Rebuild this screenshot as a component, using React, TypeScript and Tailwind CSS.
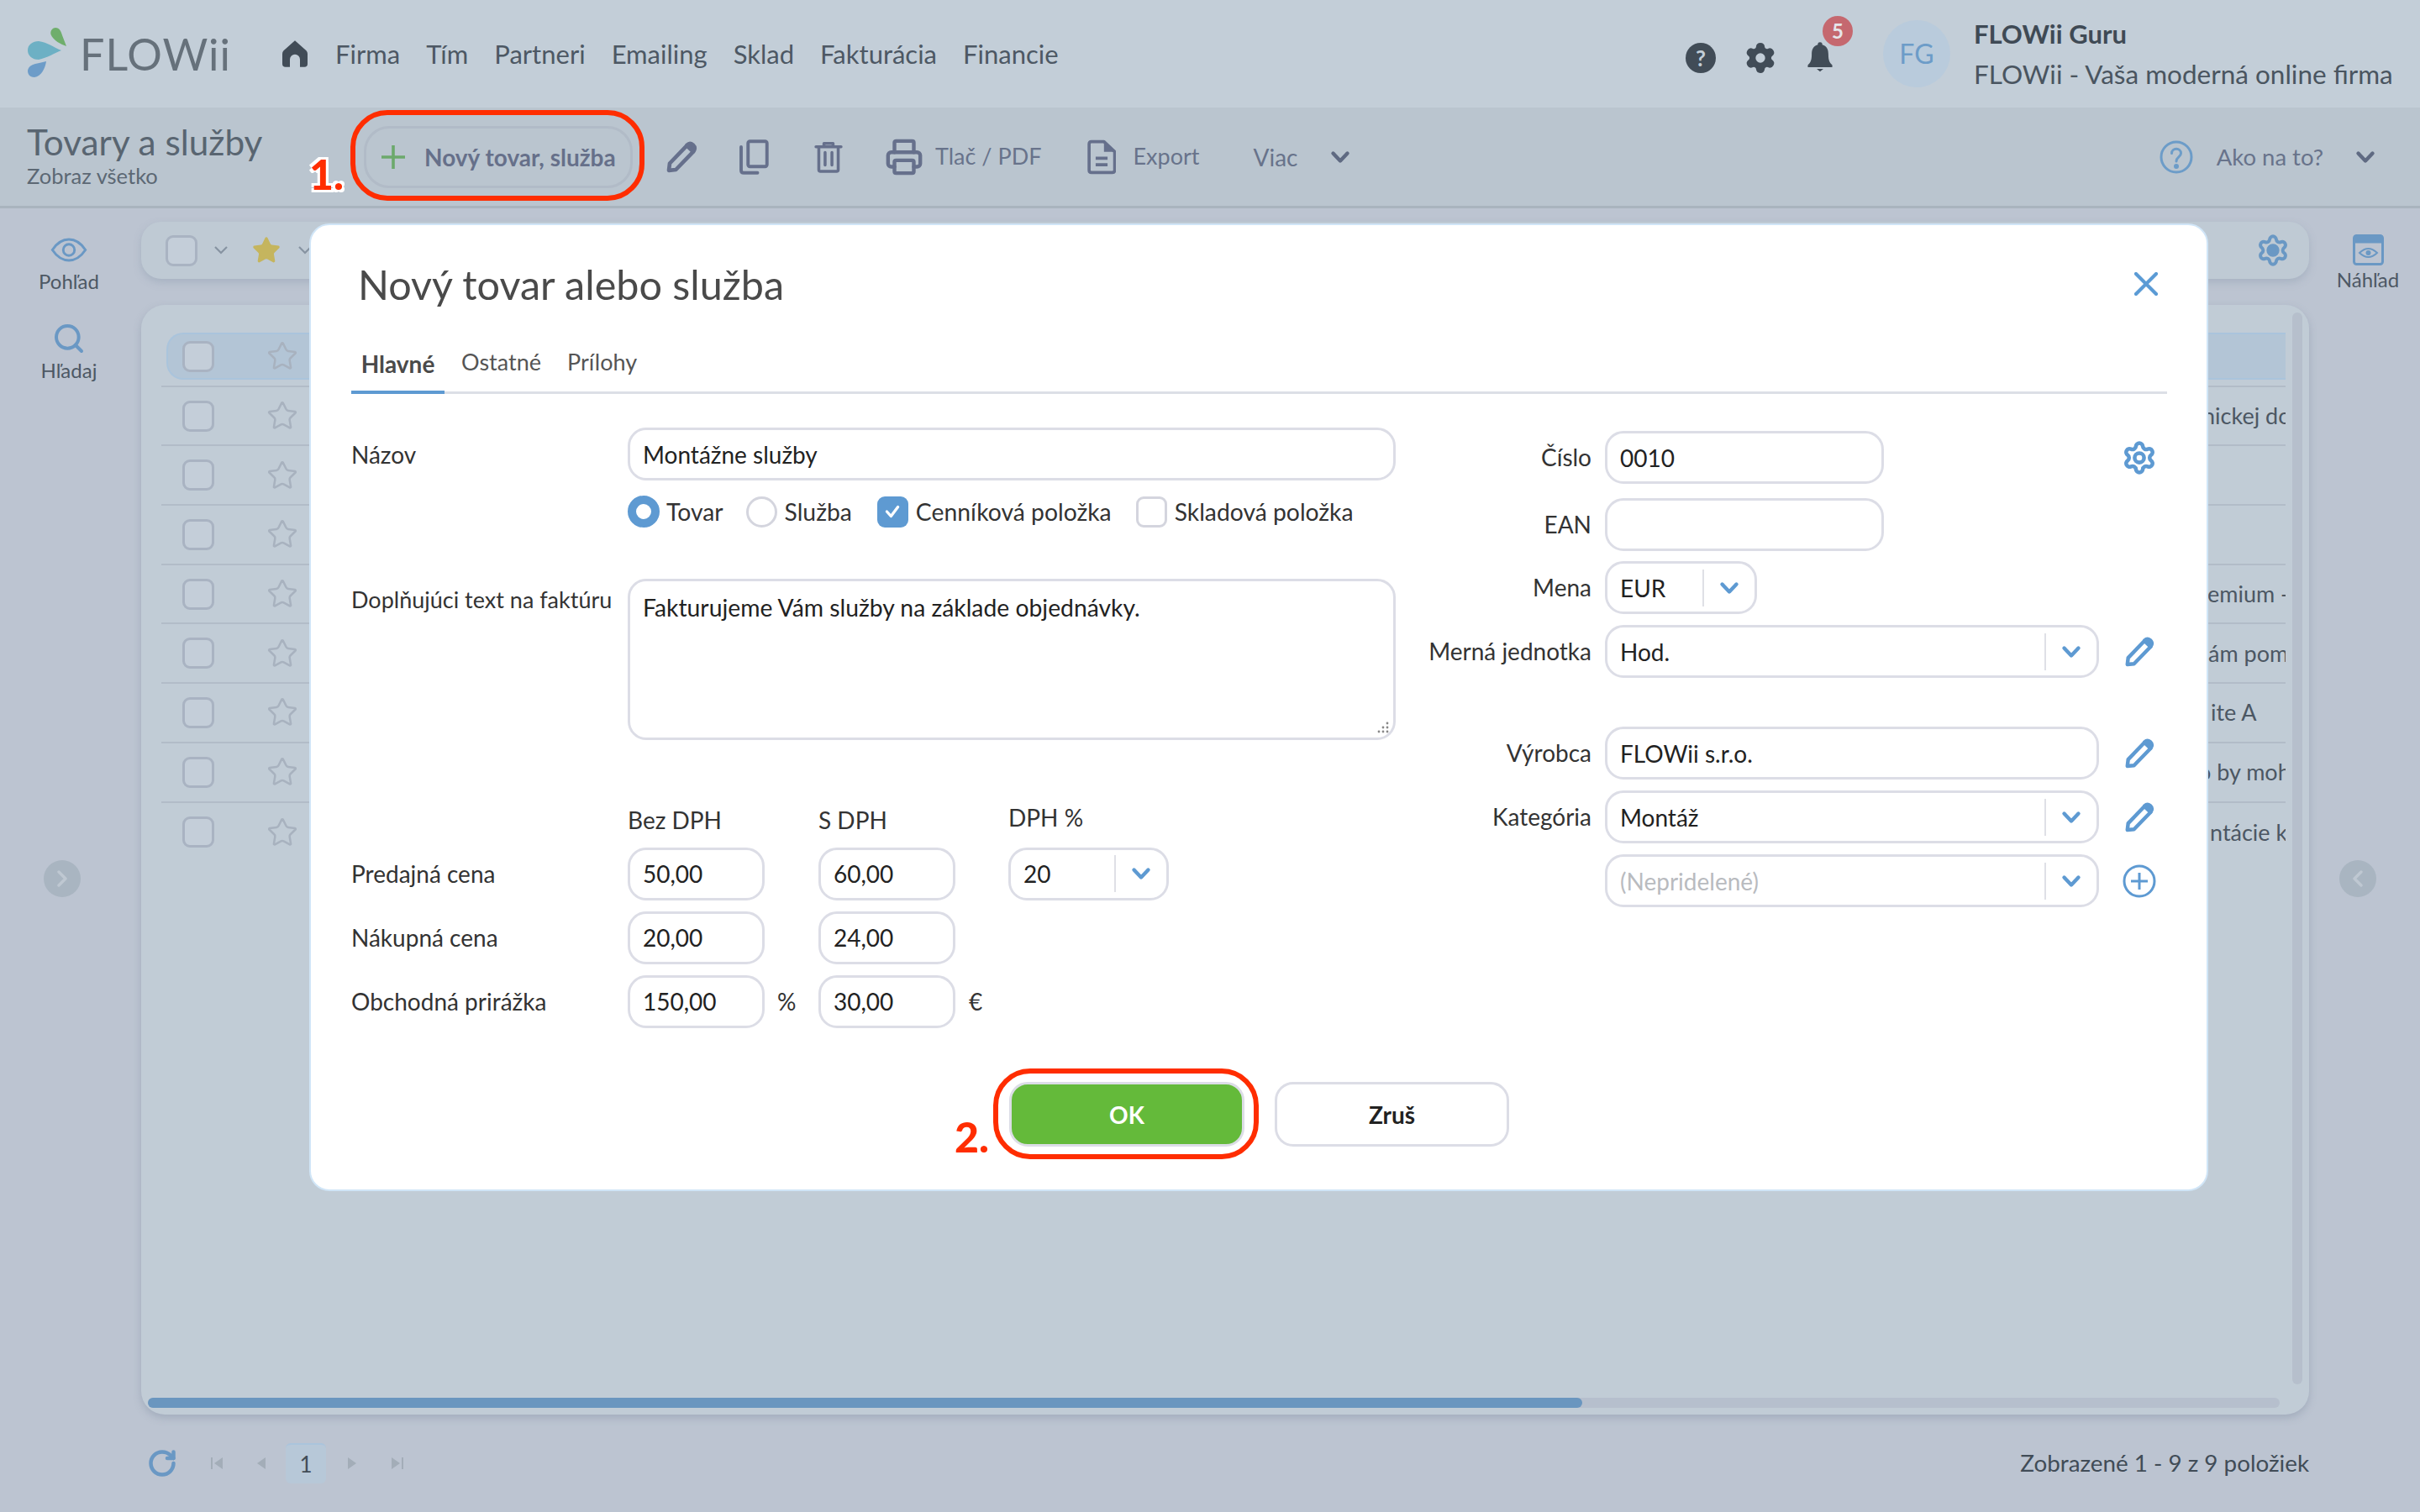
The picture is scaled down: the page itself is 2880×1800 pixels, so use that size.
import React from "react";
import { Printer, RotateCw, Search, Star } from "lucide-react";

const GEAR =
  "M9.671 4.136a2.34 2.34 0 0 1 4.659 0 2.34 2.34 0 0 0 3.319 1.915 2.34 2.34 0 0 1 2.33 4.033 2.34 2.34 0 0 0 0 3.831 2.34 2.34 0 0 1-2.33 4.033 2.34 2.34 0 0 0-3.319 1.915 2.34 2.34 0 0 1-4.659 0 2.34 2.34 0 0 0-3.32-1.915 2.34 2.34 0 0 1-2.33-4.033 2.34 2.34 0 0 0 0-3.831A2.34 2.34 0 0 1 6.35 6.051a2.34 2.34 0 0 0 3.32-1.915";

function Logo() {
  return (
    <svg viewBox="0 0 60 70" className="w-[60px] h-[70px] shrink-0">
      <path d="M49 26C43 24 33 19 30.5 12C29.5 7 33 4 36 4C41 4 43 9 44 13Z" fill="#6fae6c" />
      <path d="M43 31C35 34 26 40 16 42C8 42 3 37 3 31C3 24 9 20 16 20C26 21 35 28 43 31Z" fill="#6db0c4" />
      <path d="M25 44C24 52 19 62 11 63C5 63 3 59 3 55C4 50 8 48 12 47C17 46 21 45 25 44Z" fill="#6d9cc8" />
    </svg>
  );
}

function Pencil({ className }: { className: string }) {
  return (
    <svg viewBox="0 0 24 24" className={className} fill="none" stroke="currentColor" strokeWidth="2.8" strokeLinejoin="round">
      <path d="M3 21.5L3.6 16.5L15.8 3.8L20.4 8.2L8 21Z" />
      <path d="M16 3.4Q18 1.4 20.2 3.3Q22.4 5.4 20.6 7.8L18.2 5.6Z" fill="currentColor" />
    </svg>
  );
}

function ChevronV({ className }: { className: string }) {
  return (
    <svg viewBox="0 0 24 16" className={className} fill="none" stroke="currentColor" strokeWidth="4.4" strokeLinecap="round" strokeLinejoin="round">
      <path d="M3.5 3.5L12 12.5L20.5 3.5" />
    </svg>
  );
}

function Box() {
  return <div className="w-[38px] h-[37px] rounded-[9px] border-[3px] border-[#a9b3c2] bg-[#c4ced9] shrink-0" />;
}

function RowStar() {
  return <Star className="w-[38px] h-[38px] text-[#a8b2bf] shrink-0" strokeWidth={1.6} />;
}

function Row({ text, ml, last }: { text?: string; ml?: string; last?: boolean }) {
  return (
    <div className={`h-[70.7px] flex items-center overflow-hidden ${last ? "" : "border-b-[2px] border-[#b2bcc8]"}`}>
      <div className="ml-[25px]"><Box /></div>
      <div className="ml-[62px]"><RowStar /></div>
      {text && <span className={`whitespace-nowrap text-[27px] text-[#4c5763] ${ml}`}>{text}</span>}
    </div>
  );
}

function TextInput({ value, className = "" }: { value?: string; className?: string }) {
  return (
    <input
      readOnly
      defaultValue={value}
      className={`h-[63px] rounded-[22px] border-[3px] border-[#dcdde6] bg-white pl-[15px] text-[28px] text-[#222] outline-none ${className}`}
    />
  );
}

function SelectBox({ value, className = "", placeholder }: { value: string; className?: string; placeholder?: boolean }) {
  return (
    <div className={`h-[63px] rounded-[22px] border-[3px] border-[#dcdde6] bg-white flex items-center pl-[15px] text-[28px] ${placeholder ? "text-[#b9bbbf]" : "text-[#222]"} ${className}`}>
      <span className="flex-1">{value}</span>
      <div className="h-[44px] w-[2px] bg-[#dfe0e6]" />
      <ChevronV className="w-[24px] h-[16px] mx-[18px] text-[#5e9ad2]" />
    </div>
  );
}

function FormLabel({ children }: { children: React.ReactNode }) {
  return <div className="text-right text-[28px] text-[#333] leading-[63px] whitespace-nowrap">{children}</div>;
}

function NavItem({ children }: { children: React.ReactNode }) {
  return <span className="text-[31px] text-[#4d5864]">{children}</span>;
}

export default function App() {
  return (
    <div className="relative w-[2880px] h-[1800px] overflow-hidden bg-[#bcc4d1] flex flex-col font-['Lato',sans-serif]">
      {/* top header */}
      <header className="h-[128px] bg-[#c3ced8] flex items-center pl-[30px] shrink-0">
        <Logo />
        <span className="ml-[5px] text-[52px] tracking-[1px] text-[#66717b] leading-none">FLOWii</span>
        <svg viewBox="0 0 24 24" className="w-[36px] h-[36px] ml-[58px] text-[#414c57]" fill="currentColor">
          <path d="M12 1.5L21 9.5Q22 10.5 22 12V20Q22 22.5 19.5 22.5H16V16.5A4 4 0 0 0 8 16.5V22.5H4.5Q2 22.5 2 20V12Q2 10.5 3 9.5Z" />
        </svg>
        <nav className="ml-[30px] flex items-center gap-[31px]">
          <NavItem>Firma</NavItem>
          <NavItem>Tím</NavItem>
          <NavItem>Partneri</NavItem>
          <NavItem>Emailing</NavItem>
          <NavItem>Sklad</NavItem>
          <NavItem>Fakturácia</NavItem>
          <NavItem>Financie</NavItem>
        </nav>
        <div className="ml-auto flex items-center">
          <div className="w-[36px] h-[36px] rounded-full bg-[#414c57] text-[#c3ced8] text-[26px] font-bold flex items-center justify-center mt-[10px]">?</div>
          <svg viewBox="0 0 24 24" className="w-[40px] h-[40px] ml-[33px] mt-[10px]">
            <path d={GEAR} fill="#414c57" stroke="#414c57" strokeWidth="1.5" />
            <circle cx="12" cy="12" r="3.4" fill="#c3ced8" />
          </svg>
          <div className="relative ml-[35px] mt-[6px]">
            <svg viewBox="0 0 24 28" className="w-[32px] h-[37px] text-[#414c57]" fill="currentColor">
              <path d="M12 1A2 2 0 0 1 14 3.2C18.5 4.5 19.5 8 19.5 12C19.5 17 20.5 19.5 23 21.5V23.5H1V21.5C3.5 19.5 4.5 17 4.5 12C4.5 8 5.5 4.5 10 3.2A2 2 0 0 1 12 1ZM9 25H15L12 27.5Z" />
            </svg>
            <div className="absolute left-[19px] top-[-30px] w-[36px] h-[36px] rounded-full bg-[#c5686f] text-[#e6e6ea] text-[24px] font-bold flex items-center justify-center">5</div>
          </div>
          <div className="ml-[59px] w-[80px] h-[80px] rounded-full bg-[#b9cbdc] text-[#6c9cc8] text-[32px] flex items-center justify-center">FG</div>
          <div className="ml-[28px] mr-[33px] w-[498px]">
            <div className="text-[31px] font-bold text-[#3f4a55] leading-[36px]">FLOWii Guru</div>
            <div className="text-[31.5px] text-[#4a5560] mt-[12px] leading-[36px] whitespace-nowrap">FLOWii - Vaša moderná online firma</div>
          </div>
        </div>
      </header>

      {/* sub header */}
      <div className="h-[120px] bg-[#bac5cf] border-b-[3px] border-[#a9b4be] flex items-center pl-[32px] shrink-0">
        <div className="w-[401px] pb-[5px] shrink-0">
          <div className="text-[42.3px] text-[#596571] leading-[50px] whitespace-nowrap">Tovary a služby</div>
          <div className="text-[25.5px] text-[#5c6874] leading-[30px]">Zobraz všetko</div>
        </div>
        <div className="w-[320px] h-[74px] rounded-[30px] border-[3px] border-[#b1bbc7] flex items-center pl-[17px] shrink-0">
          <svg viewBox="0 0 30 30" className="w-[30px] h-[30px] text-[#6ca96c]" fill="none" stroke="currentColor" strokeWidth="3.6">
            <path d="M15 1V29M1 15H29" />
          </svg>
          <span className="ml-[22px] text-[28px] font-bold text-[#66708a] whitespace-nowrap">Nový tovar, služba</span>
        </div>
        <Pencil className="w-[40px] h-[40px] ml-[38px] text-[#66708c]" />
        <svg viewBox="0 0 24 28" className="w-[36px] h-[42px] ml-[48px] text-[#66708c]" fill="none" stroke="currentColor" strokeWidth="2.6" strokeLinecap="round" strokeLinejoin="round">
          <rect x="7.5" y="1.5" width="15" height="20" rx="1.5" />
          <path d="M2 6V24.5Q2 26.5 4 26.5H15" />
        </svg>
        <svg viewBox="0 0 24 28" className="w-[34px] h-[38px] ml-[54px] text-[#66708c]" fill="none" stroke="currentColor" strokeWidth="2.6" strokeLinecap="round" strokeLinejoin="round">
          <path d="M1 5H23M8 5V2H16V5M3.5 5V25Q3.5 26.5 5 26.5H19Q20.5 26.5 20.5 25V5M9 10V21M15 10V21" />
        </svg>
        <Printer className="ml-[50px] w-[46px] h-[46px] text-[#66708c]" strokeWidth={2.3} />
        <span className="ml-[14px] text-[27px] text-[#68738b]">Tlač / PDF</span>
        <svg viewBox="0 0 24 28" className="ml-[55px] w-[34px] h-[42px] text-[#66708c]">
          <path d="M3.5 1H14L23 9.5V25Q23 27 21 27H3.5Q1.5 27 1.5 25V3Q1.5 1 3.5 1Z" fill="none" stroke="currentColor" strokeWidth="2.6" strokeLinejoin="round" />
          <path d="M14 1L23 9.5H14Z" fill="currentColor" />
          <path d="M7 15H17M7 20.5H17" stroke="currentColor" strokeWidth="2.6" />
        </svg>
        <span className="ml-[20px] text-[27px] text-[#68738b]">Export</span>
        <span className="ml-[64px] text-[28px] text-[#68738b]">Viac</span>
        <ChevronV className="w-[26px] h-[16px] ml-[38px] text-[#5f6a82]" />
        <svg viewBox="0 0 40 40" className="w-[40px] h-[40px] ml-auto text-[#6c9cc8]" fill="none" stroke="currentColor" strokeWidth="3">
          <circle cx="20" cy="20" r="18" />
          <path d="M14.5 15.5C14.5 8.5 25.5 8.5 25.5 15.5C25.5 20 20 20 20 25" strokeLinecap="round" />
          <circle cx="20" cy="31" r="1.5" fill="currentColor" />
        </svg>
        <span className="ml-[28px] text-[27.5px] text-[#68738b]">Ako na to?</span>
        <ChevronV className="w-[26px] h-[16px] ml-[37px] mr-[52px] text-[#5f6a82]" />
      </div>

      {/* body */}
      <div className="flex flex-1 min-h-0">
        {/* left rail */}
        <aside className="w-[164px] mr-[4px] pt-[35px] flex flex-col items-center shrink-0">
          <svg viewBox="0 0 42 28" className="w-[44px] h-[29px] text-[#6a98c4]" fill="none" stroke="currentColor" strokeWidth="2.8">
            <path d="M2 14C8 5 15 2 21 2S34 5 40 14C34 23 27 26 21 26S8 23 2 14Z" />
            <circle cx="21" cy="14" r="6.5" />
          </svg>
          <span className="mt-[10px] text-[24px] leading-[26px] text-[#4d5864]">Pohľad</span>
          <Search className="mt-[35px] w-[40px] h-[40px] text-[#6a98c4]" strokeWidth={2.4} />
          <span className="mt-[5px] text-[24px] leading-[26px] text-[#4d5864]">Hľadaj</span>
          <div className="mt-[570px] ml-[52px] self-start w-[44px] h-[44px] rounded-full bg-[#a9b5c1] flex items-center justify-center">
            <svg viewBox="0 0 12 20" className="w-[12px] h-[20px] text-[#bfc8d2]" fill="none" stroke="currentColor" strokeWidth="3.4" strokeLinecap="round" strokeLinejoin="round">
              <path d="M2 2L10 10L2 18" />
            </svg>
          </div>
        </aside>

        {/* centre */}
        <main className="w-[2580px] shrink-0 pt-[16px] flex flex-col">
          <div className="h-[68px] rounded-[24px] bg-[#bfcad4] shadow-[0_4px_10px_rgba(130,145,165,0.35)] flex items-center pl-[29px] pr-[23px] shrink-0">
            <Box />
            <svg viewBox="0 0 16 10" className="w-[16px] h-[10px] ml-[20px] text-[#8793a1]" fill="none" stroke="currentColor" strokeWidth="2.2">
              <path d="M1 1L8 8L15 1" />
            </svg>
            <Star className="w-[36px] h-[36px] ml-[28px] text-[#c5b55e]" fill="currentColor" strokeWidth={1} />
            <svg viewBox="0 0 16 10" className="w-[16px] h-[10px] ml-[20px] text-[#8793a1]" fill="none" stroke="currentColor" strokeWidth="2.2">
              <path d="M1 1L8 8L15 1" />
            </svg>
            <svg viewBox="0 0 24 24" className="w-[40px] h-[40px] ml-auto text-[#6a98c4]" fill="none" stroke="currentColor" strokeWidth="2.4">
              <path d={GEAR} />
              <circle cx="12" cy="12" r="3.4" fill="currentColor" />
            </svg>
          </div>

          <div className="mt-[31px] h-[1321px] rounded-[28px] bg-[#c1ccd6] shadow-[0_4px_10px_rgba(130,145,165,0.45)] flex flex-col pt-[9px] pb-[8px] shrink-0">
            <div className="flex flex-1 min-h-0">
              <div className="ml-[24px] w-[2528px] pt-[18px] shrink-0">
                <div className="h-[70.7px] flex items-center border-b-[2px] border-[#b2bcc8]">
                  <div className="ml-[6px] flex-1 h-[56px] rounded-l-[20px] bg-[#b3c5d6] border-y-[2px] border-l-[2px] border-[#aac4dc] flex items-center">
                    <div className="ml-[17px]"><Box /></div>
                    <div className="ml-[62px]"><RowStar /></div>
                  </div>
                </div>
                <Row text="nickej dokumentácie" ml="ml-[2266px]" />
                <Row />
                <Row />
                <Row text="emium - balík" ml="ml-[2272px]" />
                <Row text="ám pomôžeme" ml="ml-[2273px]" />
                <Row text="ite A" ml="ml-[2276px]" />
                <Row text="o by mohlo" ml="ml-[2261px]" />
                <Row text="ntácie k" ml="ml-[2275px]" last />
              </div>
              <div className="ml-[8px] w-[12px] mb-[20px] rounded-full bg-[#b6bfcc]" />
            </div>
            <div className="mt-[-4px] ml-[8px] w-[2537px] h-[12px] rounded-full bg-[#b6bfcd] shrink-0">
              <div className="w-[1707px] h-full rounded-full bg-[#6a96bf]" />
            </div>
          </div>

          <div className="mt-[34px] flex items-center pl-[7px]">
            <RotateCw className="w-[36px] h-[36px] text-[#6a98c4]" strokeWidth={3} />
            <svg viewBox="0 0 16 16" className="w-[16px] h-[16px] ml-[39px] text-[#a3adb8]" fill="currentColor">
              <path d="M1 1H3V15H1ZM15 1V15L5 8Z" />
            </svg>
            <svg viewBox="0 0 12 16" className="w-[12px] h-[16px] ml-[39px] text-[#a3adb8]" fill="currentColor">
              <path d="M11 1V15L1 8Z" />
            </svg>
            <div className="ml-[23px] w-[48px] h-[48px] rounded-[6px] bg-[#b7c8d8] border-t-[2px] border-[#aac4dc] flex items-center justify-center text-[26px] text-[#414c57]">1</div>
            <svg viewBox="0 0 12 16" className="w-[12px] h-[16px] ml-[25px] text-[#a3adb8]" fill="currentColor">
              <path d="M1 1V15L11 8Z" />
            </svg>
            <svg viewBox="0 0 16 16" className="w-[16px] h-[16px] ml-[40px] text-[#a3adb8]" fill="currentColor">
              <path d="M15 1H13V15H15ZM1 1V15L11 8Z" />
            </svg>
            <span className="ml-auto text-[27.8px] text-[#414c57]">Zobrazené 1 - 9 z 9 položiek</span>
          </div>
        </main>

        {/* right rail */}
        <aside className="ml-[12px] w-[116px] pt-[31px] flex flex-col items-center shrink-0">
          <svg viewBox="0 0 37 37" className="w-[37px] h-[37px] text-[#6a98c4]">
            <rect x="1.5" y="1.5" width="34" height="34" rx="3" fill="none" stroke="currentColor" strokeWidth="3" />
            <rect x="1.5" y="1.5" width="34" height="9" fill="currentColor" />
            <path d="M8 22Q18.5 12 29 22Q18.5 32 8 22Z" fill="none" stroke="currentColor" strokeWidth="2" />
            <circle cx="18.5" cy="22" r="3" fill="currentColor" />
          </svg>
          <span className="mt-[4px] text-[24px] leading-[26px] text-[#4d5864]">Náhľad</span>
          <div className="mt-[678px] ml-[24px] self-start w-[44px] h-[44px] rounded-full bg-[#a9b5c1] flex items-center justify-center">
            <svg viewBox="0 0 12 20" className="w-[12px] h-[20px] text-[#bfc8d2]" fill="none" stroke="currentColor" strokeWidth="3.4" strokeLinecap="round" strokeLinejoin="round">
              <path d="M10 2L2 10L10 18" />
            </svg>
          </div>
        </aside>
      </div>

      {/* dialog */}
      <div className="absolute left-[368px] top-[266px] w-[2260px] h-[1152px] rounded-[24px] border-[2px] border-[#d0e5f7] bg-white pl-[48px] pr-[47px]">
        <div className="mt-[40px] h-[60px] flex items-center justify-between pl-[8px] pr-[11px]">
          <h1 className="text-[48.5px] text-[#4a4a4a] leading-[60px] font-normal">Nový tovar alebo služba</h1>
          <svg viewBox="0 0 28 28" className="w-[28px] h-[28px] text-[#5b9bd5]" fill="none" stroke="currentColor" strokeWidth="4.2" strokeLinecap="round">
            <path d="M2 2L26 26M26 2L2 26" />
          </svg>
        </div>
        <div className="mt-[32px] h-[69px] border-b-[3px] border-[#dcdfe6] flex items-end">
          <div className="w-[111px] h-[69px] mb-[-3px] border-b-[4px] border-[#5e9ad2] flex items-center justify-center text-[28px] font-bold text-[#4a4a4a]">Hlavné</div>
          <div className="ml-[20px] h-[69px] flex items-center text-[27px] text-[#555]">Ostatné</div>
          <div className="ml-[31px] h-[69px] flex items-center text-[27px] text-[#555]">Prílohy</div>
        </div>

        <div className="flex mt-[40px]">
          {/* left column */}
          <div className="w-[1243px] shrink-0">
            <div className="flex items-center">
              <div className="w-[329px] text-[28px] text-[#333]">Názov</div>
              <TextInput value="Montážne služby" className="w-[914px]" />
            </div>
            <div className="ml-[329px] mt-[18px] h-[38px] flex items-center text-[28.3px] text-[#333]">
              <div className="w-[38px] h-[38px] rounded-full border-[10px] border-[#5e9ad2] bg-white" />
              <span className="ml-[8px]">Tovar</span>
              <div className="ml-[27px] w-[37px] h-[37px] rounded-full border-[3px] border-[#d4d5de] bg-white" />
              <span className="ml-[9px]">Služba</span>
              <div className="ml-[30px] w-[37px] h-[37px] rounded-[9px] bg-[#5e9ad2] flex items-center justify-center">
                <svg viewBox="0 0 20 20" className="w-[22px] h-[22px] text-white" fill="none" stroke="currentColor" strokeWidth="3" strokeLinecap="round" strokeLinejoin="round">
                  <path d="M4 10L8.5 15L16 5" />
                </svg>
              </div>
              <span className="ml-[9px]">Cenníková položka</span>
              <div className="ml-[29px] w-[37px] h-[37px] rounded-[9px] border-[3px] border-[#d4d5de] bg-white" />
              <span className="ml-[9px]">Skladová položka</span>
            </div>
            <div className="flex items-start mt-[61px]">
              <div className="w-[329px] text-[27px] text-[#333] leading-[50px] whitespace-nowrap">Doplňujúci text na faktúru</div>
              <div className="relative w-[914px] h-[192px] rounded-[22px] border-[3px] border-[#dcdde6] bg-white pl-[15px] pt-[13px] text-[28.3px] text-[#222] leading-[36px]">
                Fakturujeme Vám služby na základe objednávky.
                <svg viewBox="0 0 16 16" className="absolute right-[4px] bottom-[4px] w-[16px] h-[16px] text-[#888]" fill="currentColor">
                  <circle cx="13" cy="3" r="1.4" /><circle cx="13" cy="8" r="1.4" /><circle cx="8" cy="8" r="1.4" />
                  <circle cx="13" cy="13" r="1.4" /><circle cx="8" cy="13" r="1.4" /><circle cx="3" cy="13" r="1.4" />
                </svg>
              </div>
            </div>

            <div className="mt-[72px] grid grid-cols-[329px_163px_64px_163px_63px_191px] grid-rows-[43px_64px_64px_64px] gap-y-[12px] items-center text-[28px] text-[#333]">
              <div />
              <div className="leading-[37px] mt-[3px]">Bez DPH</div>
              <div />
              <div className="leading-[37px] mt-[3px]">S DPH</div>
              <div />
              <div className="leading-[37px] mt-[-3px]">DPH %</div>

              <div>Predajná cena</div>
              <TextInput value="50,00" className="w-[163px]" />
              <div />
              <TextInput value="60,00" className="w-[163px]" />
              <div />
              <SelectBox value="20" className="w-[191px]" />

              <div>Nákupná cena</div>
              <TextInput value="20,00" className="w-[163px]" />
              <div />
              <TextInput value="24,00" className="w-[163px]" />
              <div />
              <div />

              <div>Obchodná prirážka</div>
              <TextInput value="150,00" className="w-[163px]" />
              <div className="pl-[15px]">%</div>
              <TextInput value="30,00" className="w-[163px]" />
              <div className="pl-[16px]">€</div>
              <div />
            </div>
          </div>

          {/* right column */}
          <div className="ml-[39px] grid grid-cols-[194px_588px_69px] gap-x-[16px] content-start mt-[4px] items-center">
            <FormLabel>Číslo</FormLabel>
            <TextInput value="0010" className="w-[332px]" />
            <svg viewBox="0 0 24 24" className="w-[42px] h-[42px] ml-[11px] text-[#5e9ad2]" fill="none" stroke="currentColor" strokeWidth="2.6">
              <path d={GEAR} />
              <circle cx="12" cy="12" r="3.2" />
            </svg>

            <div className="col-span-3 h-[17px]" />
            <FormLabel>EAN</FormLabel>
            <TextInput className="w-[332px]" />
            <div />

            <div className="col-span-3 h-[12px]" />
            <FormLabel>Mena</FormLabel>
            <SelectBox value="EUR" className="w-[181px]" />
            <div />

            <div className="col-span-3 h-[13px]" />
            <FormLabel>Merná jednotka</FormLabel>
            <SelectBox value="Hod." className="w-[588px]" />
            <Pencil className="w-[38px] h-[38px] ml-[13px] text-[#5e9ad2]" />

            <div className="col-span-3 h-[58px]" />
            <FormLabel>Výrobca</FormLabel>
            <TextInput value="FLOWii s.r.o." className="w-[588px]" />
            <Pencil className="w-[38px] h-[38px] ml-[13px] text-[#5e9ad2]" />

            <div className="col-span-3 h-[13px]" />
            <FormLabel>Kategória</FormLabel>
            <SelectBox value="Montáž" className="w-[588px]" />
            <Pencil className="w-[38px] h-[38px] ml-[13px] text-[#5e9ad2]" />

            <div className="col-span-3 h-[13px]" />
            <div />
            <SelectBox value="(Nepridelené)" className="w-[588px]" placeholder />
            <svg viewBox="0 0 40 40" className="w-[40px] h-[40px] ml-[12px] text-[#5e9ad2]" fill="none" stroke="currentColor" strokeWidth="3">
              <circle cx="20" cy="20" r="18" />
              <path d="M20 10V30M10 20H30" />
            </svg>
          </div>
        </div>

        <div className="mt-[64px] flex justify-center gap-[36px]">
          <div className="w-[280px] h-[77px] rounded-[22px] bg-[#64ba3a] border-[3px] border-[#dcdde6] flex items-center justify-center text-[28px] font-bold text-white">OK</div>
          <div className="w-[279px] h-[77px] rounded-[22px] bg-white border-[3px] border-[#dcdde6] flex items-center justify-center text-[28px] font-bold text-[#222]">Zruš</div>
        </div>
      </div>

      {/* annotations */}
      <div className="absolute left-[417px] top-[131px] w-[350px] h-[108px] rounded-[44px] border-[6px] border-[#ff2d00]" />
      <span className="absolute left-[368px] top-[179px] text-[50px] leading-[56px] font-black text-[#ff2d00] [text-shadow:-3px_-3px_0_#fff,3px_-3px_0_#fff,-3px_3px_0_#fff,3px_3px_0_#fff]">1.</span>
      <div className="absolute left-[1182px] top-[1272px] w-[316px] h-[108px] rounded-[44px] border-[6px] border-[#ff2d00]" />
      <span className="absolute left-[1136px] top-[1325px] text-[50px] leading-[56px] font-black text-[#ff2d00] [text-shadow:-3px_-3px_0_#fff,3px_-3px_0_#fff,-3px_3px_0_#fff,3px_3px_0_#fff]">2.</span>
    </div>
  );
}
